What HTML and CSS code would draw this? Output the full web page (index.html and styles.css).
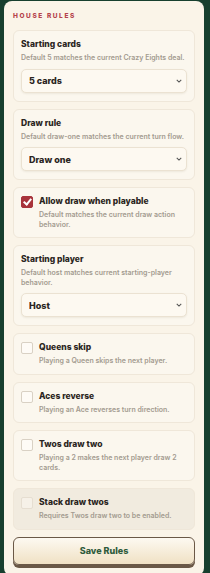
FILE: index.html
```html
<!DOCTYPE html>
<html lang="en">
<head>
    <meta charset="UTF-8">
    <meta name="viewport" content="width=device-width, initial-scale=1.0">
    <title>House Rules</title>
    <link rel="stylesheet" href="styles.css">
</head>
<body>

    <div class="panel">
        <div class="panel-title">HOUSE RULES</div>

        <div class="rule">
            <div class="rule-name">Starting cards</div>
            <div class="rule-desc">Default 5 matches the current Crazy Eights deal.</div>
            <div class="select-wrap">
                <select class="rule-select">
                    <option>5 cards</option>
                    <option>7 cards</option>
                </select>
                <svg class="chev" viewBox="0 0 8 5" width="6" height="4"><path d="M1 1l3 3 3-3" fill="none" stroke="#555" stroke-width="1.4"/></svg>
            </div>
        </div>

        <div class="rule">
            <div class="rule-name">Draw rule</div>
            <div class="rule-desc">Default draw-one matches the current turn flow.</div>
            <div class="select-wrap">
                <select class="rule-select">
                    <option>Draw one</option>
                    <option>Draw until playable</option>
                </select>
                <svg class="chev" viewBox="0 0 8 5" width="6" height="4"><path d="M1 1l3 3 3-3" fill="none" stroke="#555" stroke-width="1.4"/></svg>
            </div>
        </div>

        <label class="rule check">
            <input type="checkbox" checked>
            <span class="box"></span>
            <span>
                <span class="rule-name">Allow draw when playable</span>
                <span class="rule-desc">Default matches the current draw action behavior.</span>
            </span>
        </label>

        <div class="rule">
            <div class="rule-name">Starting player</div>
            <div class="rule-desc">Default host matches current starting-player behavior.</div>
            <div class="select-wrap">
                <select class="rule-select">
                    <option>Host</option>
                    <option>Random</option>
                </select>
                <svg class="chev" viewBox="0 0 8 5" width="6" height="4"><path d="M1 1l3 3 3-3" fill="none" stroke="#555" stroke-width="1.4"/></svg>
            </div>
        </div>

        <label class="rule check">
            <input type="checkbox">
            <span class="box"></span>
            <span>
                <span class="rule-name">Queens skip</span>
                <span class="rule-desc">Playing a Queen skips the next player.</span>
            </span>
        </label>

        <label class="rule check">
            <input type="checkbox">
            <span class="box"></span>
            <span>
                <span class="rule-name">Aces reverse</span>
                <span class="rule-desc">Playing an Ace reverses turn direction.</span>
            </span>
        </label>

        <label class="rule check">
            <input type="checkbox">
            <span class="box"></span>
            <span>
                <span class="rule-name">Twos draw two</span>
                <span class="rule-desc">Playing a 2 makes the next player draw 2 cards.</span>
            </span>
        </label>

        <label class="rule check disabled">
            <input type="checkbox" disabled>
            <span class="box"></span>
            <span>
                <span class="rule-name">Stack draw twos</span>
                <span class="rule-desc">Requires Twos draw two to be enabled.</span>
            </span>
        </label>

        <button class="save">Save Rules</button>
    </div>

</body>
</html>
```

FILE: styles.css
```css
body {
    margin: 0;
    padding: 1px 6px 0 4px;
    background-color: #173f2e;
    font-family: Inter, "Noto Sans", sans-serif;
    color: #2a2521;
}
.panel {
    background-color: #faf4e8;
    border-radius: 8px;
    padding: 10px 9px 8px;
    display: flex;
    flex-direction: column;
    gap: 7px;
}
.panel-title {
    font-size: 6.5px;
    font-weight: 800;
    letter-spacing: 1.6px;
    color: #b5434c;
    line-height: 10px;
    margin-bottom: 2px;
}
.rule {
    display: block;
    background-color: #fbf7ee;
    border: 1px solid #efe7d9;
    border-radius: 6px;
    padding: 8px 7px 8px;
}
.rule-name {
    display: block;
    font-size: 8.5px;
    font-weight: 800;
    line-height: 11px;
    color: #2a2521;
}
.rule-desc {
    display: block;
    font-size: 7px;
    font-weight: 600;
    line-height: 9.5px;
    color: #a39b90;
    margin-top: 3px;
}
.select-wrap {
    position: relative;
    margin-top: 6px;
}
.rule-select {
    display: block;
    width: 100%;
    height: 24px;
    padding: 0 7px;
    appearance: none;
    font-family: Inter, "Noto Sans", sans-serif;
    font-size: 9px;
    font-weight: 800;
    color: #2a2521;
    background-color: #fdf9f1;
    border: 1px solid #ebe2d2;
    border-radius: 5px;
    box-shadow: 0 1px 2px rgba(80, 60, 30, 0.08);
}
.chev {
    position: absolute;
    right: 5px;
    top: 10px;
}
.check {
    display: flex;
    gap: 6px;
    align-items: flex-start;
}
.check input {
    display: none;
}
.check .box {
    flex: none;
    width: 10px;
    height: 10px;
    border: 1px solid #d9d1c4;
    border-radius: 2px;
    background-color: #fefbf6;
}
.check input:checked + .box {
    background-color: #a8343c;
    border-color: #a8343c;
    position: relative;
}
.check input:checked + .box::after {
    content: "";
    position: absolute;
    left: 3px;
    top: 0px;
    width: 3px;
    height: 6px;
    border: solid #fff;
    border-width: 0 2px 2px 0;
    transform: rotate(40deg);
}
.disabled {
    background-color: #f1ebdf;
}
.disabled .box {
    background-color: #f6f1e8;
    border-color: #e6ded1;
}
.save {
    height: 28px;
    font-family: Inter, "Noto Sans", sans-serif;
    font-size: 9px;
    font-weight: 800;
    color: #2f5b3c;
    background: linear-gradient(#fdf9f1, #f0e1c4);
    border: 1px solid #6a5846;
    border-radius: 6px;
    box-shadow: 0 3px 0 #6a5846;
    margin-bottom: 3px;
}
```
